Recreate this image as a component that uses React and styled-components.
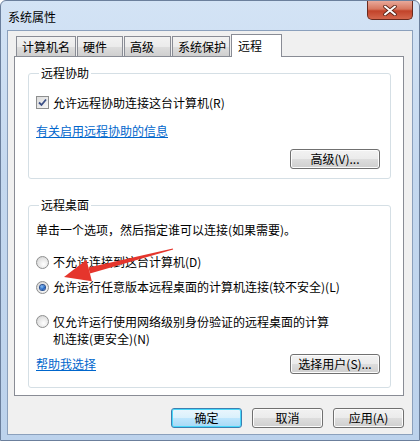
import React from "react";
import styled, { createGlobalStyle } from "styled-components";

const GlobalStyle = createGlobalStyle`
  html, body {
    margin: 0;
    padding: 0;
    background: #ffffff;
    overflow: hidden;
  }
  * {
    box-sizing: border-box;
  }
  body {
    font-family: "Noto Sans CJK SC", "Noto Sans", "Liberation Sans", sans-serif;
    font-size: 12px;
    color: #000;
  }
`;

const tabs = [
  { label: "计算机名", width: 60 },
  { label: "硬件", width: 46 },
  { label: "高级", width: 47 },
  { label: "系统保护", width: 58 },
  { label: "远程", width: 51, active: true },
];

const App = () => {
  return (
    <>
      <GlobalStyle />
      <Window>
        <TitleBar>
          <Title>系统属性</Title>
          <CloseButton>
            <svg width="14" height="11" viewBox="0 0 14 11">
              <path d="M2 1.5 L12 9.5 M12 1.5 L2 9.5" stroke="#5a2418" strokeWidth="3.6" strokeLinecap="round" />
              <path d="M2 1.5 L12 9.5 M12 1.5 L2 9.5" stroke="#ffffff" strokeWidth="2" strokeLinecap="round" />
            </svg>
          </CloseButton>
        </TitleBar>

        <Client>
          <TabStrip>
            {tabs.map((t) => (
              <Tab key={t.label} $active={t.active} style={{ width: t.width }}>
                {t.label}
              </Tab>
            ))}
          </TabStrip>

          <Panel>
            <Group>
              <Legend>远程协助</Legend>
              <OptionRow>
                <CheckBox>
                  <svg width="9" height="9" viewBox="0 0 9 9">
                    <path d="M1 4.5 L3.5 7 L8 1.5" stroke="#3b4f86" strokeWidth="1.8" fill="none" />
                  </svg>
                </CheckBox>
                <span>允许远程协助连接这台计算机(R)</span>
              </OptionRow>
              <Link $top={12}>有关启用远程协助的信息</Link>
              <ButtonRow $top={10}>
                <Button $width={90}>高级(V)...</Button>
              </ButtonRow>
            </Group>

            <Group $top={18} $bottom={13}>
              <Legend>远程桌面</Legend>
              <Intro>单击一个选项，然后指定谁可以连接(如果需要)。</Intro>
              <OptionRow $top={16}>
                <Radio />
                <span>不允许连接到这台计算机(D)</span>
              </OptionRow>
              <OptionRow $top={9}>
                <Radio $checked />
                <span>允许运行任意版本远程桌面的计算机连接(较不安全)(L)</span>
              </OptionRow>
              <OptionRow $top={18} $tall>
                <Radio />
                <span>
                  仅允许运行使用网络级别身份验证的远程桌面的计算
                  <br />
                  机连接(更安全)(N)
                </span>
              </OptionRow>
              <ButtonRow $top={7} $split>
                <Link>帮助我选择</Link>
                <Button $width={90}>选择用户(S)...</Button>
              </ButtonRow>
            </Group>
          </Panel>

          <DialogButtons>
            <Button $width={71} $default>确定</Button>
            <Button $width={71}>取消</Button>
            <Button $width={71}>应用(A)</Button>
          </DialogButtons>
        </Client>

        <Arrow width="420" height="441" viewBox="0 0 420 441">
          <polygon points="89.9,273.4 88.5,267.6 172.85,248.4 173.15,249.6" fill="#e5352c" />
          <polygon points="64,277 86.5,259.8 91.9,281.2" fill="#e5352c" />
        </Arrow>
      </Window>
    </>
  );
};

export default App;

const Window = styled.div`
  position: relative;
  width: 420px;
  height: 441px;
  border: 1px solid #6b7f9c;
  border-radius: 6px 6px 0 0;
  background: linear-gradient(180deg, #d3e3f5 0%, #c4d8ef 40%, #bcd2ec 100%);
  padding: 0 6px 5px 6px;
  display: flex;
  flex-direction: column;
`;

const TitleBar = styled.div`
  height: 29px;
  display: flex;
  align-items: center;
  padding-left: 1px;
`;

const Title = styled.div`
  font-size: 12px;
  color: #000;
  margin-top: 1px;
`;

const CloseButton = styled.div`
  align-self: flex-start;
  margin-left: auto;
  width: 46px;
  height: 19px;
  border: 1px solid #6a2a1e;
  border-top: none;
  border-radius: 0 0 5px 5px;
  background: linear-gradient(180deg, #e9a99a 0%, #d7775f 45%, #c2432a 55%, #d4664c 100%);
  display: flex;
  align-items: center;
  justify-content: center;
`;

const Client = styled.div`
  height: 405px;
  border: 1px solid #8ba0bc;
  background: #f0f0f0;
  padding: 3px 8px 0 6px;
  display: flex;
  flex-direction: column;
`;

const TabStrip = styled.div`
  position: relative;
  z-index: 2;
  height: 23px;
  display: flex;
  align-items: flex-end;
  padding-left: 2px;
`;

const Tab = styled.div`
  height: ${(p) => (p.$active ? "23px" : "21px")};
  margin-right: 1px;
  padding: ${(p) => (p.$active ? "3px 6px 0" : "2px 5px 0")};
  border: 1px solid #898c95;
  border-bottom: ${(p) => (p.$active ? "none" : "1px solid #898c95")};
  background: ${(p) =>
    p.$active ? "#ffffff" : "linear-gradient(180deg, #f2f2f2 0%, #ebebeb 50%, #dddddd 51%, #cfcfcf 100%)"};
  font-size: 12px;
  line-height: 16px;
  white-space: nowrap;
`;

const Panel = styled.div`
  margin-top: -1px;
  height: 340px;
  border: 1px solid #898c95;
  background: #ffffff;
  padding: 8px 12px 0 13px;
`;

const Group = styled.fieldset`
  margin: ${(p) => p.$top || 0}px 0 0 0;
  min-width: 0;
  border: 1px solid #d5dfe5;
  border-radius: 3px;
  padding: 14px 10px ${(p) => p.$bottom || 9}px 7px;
`;

const Legend = styled.legend`
  padding: 0 2px;
  margin-left: 3px;
  line-height: 16px;
  font-size: 12px;
`;

const Intro = styled.div`
  margin-top: -5px;
  line-height: 16px;
`;

const OptionRow = styled.div`
  display: flex;
  align-items: flex-start;
  gap: 4px;
  margin-top: ${(p) => p.$top || 0}px;
  line-height: ${(p) => (p.$tall ? "17px" : "16px")};
  white-space: nowrap;
`;

const CheckBox = styled.div`
  flex: none;
  width: 13px;
  height: 13px;
  margin-top: 1px;
  border: 1px solid #8e8f8f;
  background: linear-gradient(135deg, #dcdcdc 0%, #f6f6f6 100%);
  display: flex;
  align-items: center;
  justify-content: center;
`;

const Radio = styled.div`
  flex: none;
  width: 13px;
  height: 13px;
  margin-top: 2px;
  border-radius: 50%;
  border: 1px solid #8e8f8f;
  background: radial-gradient(circle at 60% 65%, #ffffff 0%, #e2e2e2 60%, #c9c9c9 100%);
  display: flex;
  align-items: center;
  justify-content: center;

  &::after {
    content: "";
    display: ${(p) => (p.$checked ? "block" : "none")};
    width: 5px;
    height: 5px;
    border-radius: 50%;
    background: radial-gradient(circle at 40% 35%, #8fc4f5 0%, #1b5fc0 60%, #0d3d8c 100%);
    box-shadow: 0 0 0 1px #2a4f8f;
  }
`;

const Link = styled.div`
  margin-top: ${(p) => p.$top || 0}px;
  line-height: 16px;
  color: #0066cc;
  text-decoration: underline;
  cursor: pointer;
`;

const ButtonRow = styled.div`
  display: flex;
  align-items: center;
  justify-content: ${(p) => (p.$split ? "space-between" : "flex-end")};
  margin-top: ${(p) => p.$top || 0}px;
`;

const Button = styled.div`
  width: ${(p) => p.$width}px;
  height: 20px;
  border: 1px solid ${(p) => (p.$default ? "#3c7fb1" : "#707070")};
  border-radius: 3px;
  background: ${(p) =>
    p.$default
      ? "linear-gradient(180deg, #eaf6fd 0%, #d9f0fc 50%, #bee6fd 51%, #a7d9f5 100%)"
      : "linear-gradient(180deg, #f2f2f2 0%, #ebebeb 50%, #dddddd 51%, #cfcfcf 100%)"};
  box-shadow: inset 0 0 0 1px ${(p) => (p.$default ? "#48d8fb" : "#fcfcfc")};
  display: flex;
  align-items: center;
  justify-content: center;
  font-size: 12px;
  line-height: 16px;
  white-space: nowrap;
`;

const DialogButtons = styled.div`
  display: flex;
  justify-content: flex-end;
  gap: 10px;
  margin-top: 12px;
`;

const Arrow = styled.svg`
  position: absolute;
  left: -1px;
  top: -1px;
  pointer-events: none;
`;
